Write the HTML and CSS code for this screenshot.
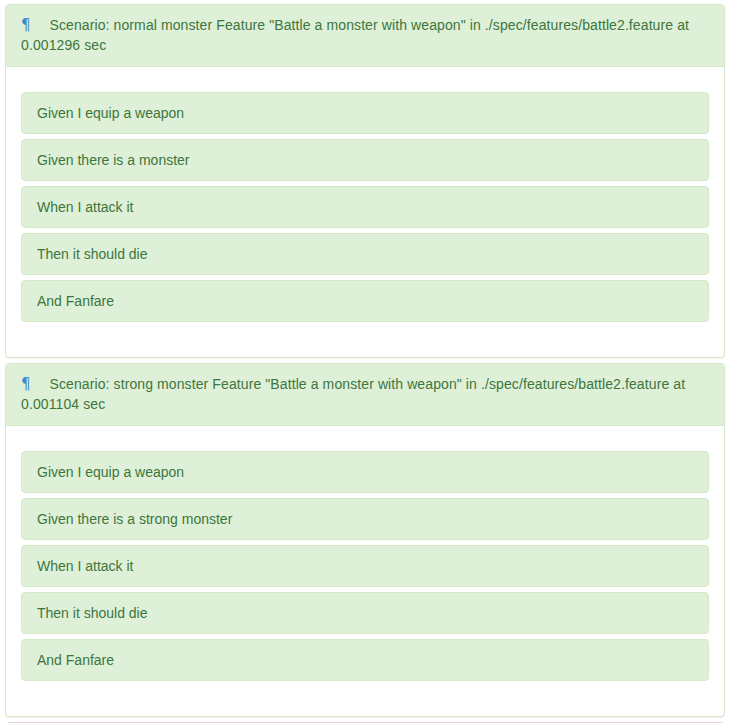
FILE: index.html
```html
<!DOCTYPE html>
<html>
<head>
<meta charset="utf-8">
<link rel="stylesheet" href="styles.css">
</head>
<body>
<div class="page">
  <div class="panel panel-success">
    <div class="panel-heading"><a class="anchor" href="#">¶</a>Scenario: normal monster Feature "Battle a monster with weapon" in ./spec/features/battle2.feature at 0.001296 sec</div>
    <div class="panel-body">
      <ul class="steps">
        <li class="step">Given I equip a weapon</li>
        <li class="step">Given there is a monster</li>
        <li class="step">When I attack it</li>
        <li class="step">Then it should die</li>
        <li class="step">And Fanfare</li>
      </ul>
    </div>
  </div>
  <div class="panel panel-success">
    <div class="panel-heading"><a class="anchor" href="#">¶</a>Scenario: strong monster Feature "Battle a monster with weapon" in ./spec/features/battle2.feature at 0.001104 sec</div>
    <div class="panel-body">
      <ul class="steps">
        <li class="step">Given I equip a weapon</li>
        <li class="step">Given there is a strong monster</li>
        <li class="step">When I attack it</li>
        <li class="step">Then it should die</li>
        <li class="step">And Fanfare</li>
      </ul>
    </div>
  </div>
  <div class="panel panel-danger">
    <div class="panel-heading panel-heading-empty"></div>
  </div>
</div>
</body>
</html>
```

FILE: styles.css
```css
html, body {
  margin: 0;
  padding: 0;
  background: #fff;
  overflow: hidden;
}
body {
  font-family: "Liberation Sans", Arial, Helvetica, sans-serif;
  font-size: 14px;
  line-height: 20px;
  color: #333;
}
.page {
  padding: 4px 7px 0 5px;
}
.panel {
  background: #fff;
  border: 1px solid #d6e9c6;
  border-radius: 4px;
  box-shadow: 0 1px 1px rgba(0, 0, 0, 0.05);
  margin-bottom: 5px;
}
.panel-heading {
  background: #dff0d8;
  color: #3c763d;
  padding: 10px 15px 11px;
  border-bottom: 1px solid #d6e9c6;
  border-radius: 3px 3px 0 0;
  letter-spacing: 0.1px;
}
.panel-heading-empty {
  height: 40px;
}
.panel-danger {
  border-color: #ebccd1;
}
.panel-danger .panel-heading {
  background: #f2dede;
  color: #a94442;
  border-color: #ebccd1;
}
.anchor {
  color: #428bca;
  text-decoration: none;
  font-family: "DejaVu Sans", sans-serif;
  font-size: 15px;
  line-height: 20px;
  letter-spacing: 0;
  margin-right: 19px;
}
.panel-body {
  padding: 25px 15px 35px;
}
.steps {
  list-style: none;
  margin: 0;
  padding: 0;
  display: flex;
  flex-direction: column;
  gap: 5px;
}
.step {
  background: #dff0d8;
  border: 1px solid #d6e9c6;
  border-radius: 4px;
  color: #3c763d;
  padding: 10px 15px;
}
```
